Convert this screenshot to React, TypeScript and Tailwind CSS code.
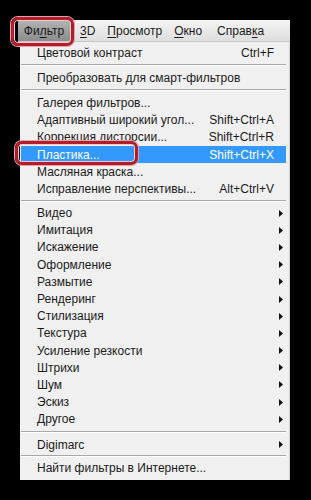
import React from "react";

type Item =
  | { t: "row"; label: string; sc?: string; sub?: boolean; hl?: boolean }
  | { t: "sep"; h: number };

const items: Item[] = [
  { t: "row", label: "Цветовой контраст", sc: "Ctrl+F" },
  { t: "sep", h: 8 },
  { t: "row", label: "Преобразовать для смарт-фильтров" },
  { t: "sep", h: 8 },
  { t: "row", label: "Галерея фильтров..." },
  { t: "row", label: "Адаптивный широкий угол...", sc: "Shift+Ctrl+A" },
  { t: "row", label: "Коррекция дисторсии...", sc: "Shift+Ctrl+R" },
  { t: "row", label: "Пластика...", sc: "Shift+Ctrl+X", hl: true },
  { t: "row", label: "Масляная краска..." },
  { t: "row", label: "Исправление перспективы...", sc: "Alt+Ctrl+V" },
  { t: "sep", h: 7 },
  { t: "row", label: "Видео", sub: true },
  { t: "row", label: "Имитация", sub: true },
  { t: "row", label: "Искажение", sub: true },
  { t: "row", label: "Оформление", sub: true },
  { t: "row", label: "Размытие", sub: true },
  { t: "row", label: "Рендеринг", sub: true },
  { t: "row", label: "Стилизация", sub: true },
  { t: "row", label: "Текстура", sub: true },
  { t: "row", label: "Усиление резкости", sub: true },
  { t: "row", label: "Штрихи", sub: true },
  { t: "row", label: "Шум", sub: true },
  { t: "row", label: "Эскиз", sub: true },
  { t: "row", label: "Другое", sub: true },
  { t: "sep", h: 8 },
  { t: "row", label: "Digimarc", sub: true },
  { t: "sep", h: 6 },
  { t: "row", label: "Найти фильтры в Интернете..." },
];

function Arrow({ white }: { white?: boolean }) {
  return (
    <svg width="4" height="7" viewBox="0 0 4 7" className="block">
      <path d="M0 0 L4 3.5 L0 7 Z" fill={white ? "#fff" : "#111"} />
    </svg>
  );
}

export default function App() {
  const font = { fontFamily: '"Liberation Sans", Arial, sans-serif' };
  return (
    <div className="relative w-[311px] h-[500px] bg-black overflow-hidden" style={font}>
      {/* Menu bar */}
      <div className="ml-[18px] mt-[20px] w-[272px] h-[22px] flex items-center bg-gradient-to-b from-[#f4f4f4] to-[#dedede] border-b border-[#c8c8c8] text-[12px] text-[#1b1b1b] leading-none">
        <div className="h-full w-[52px] flex items-center justify-center bg-gradient-to-b from-[#b4b4b4] to-[#8c8c8c]">
          <span>Фи<span className="underline underline-offset-2">л</span>ьтр</span>
        </div>
        <span className="ml-[10px]"><span className="underline underline-offset-2">3</span>D</span>
        <span className="ml-[12px]"><span className="underline underline-offset-2">П</span>росмотр</span>
        <span className="ml-[12px]"><span className="underline underline-offset-2">О</span>кно</span>
        <span className="ml-[15px]">Справ<span className="underline underline-offset-2">к</span>а</span>
      </div>

      {/* Dropdown panel */}
      <div className="ml-[20px] w-[270px] h-[438px] bg-[#f0f0f0] border-r border-[#cfcfcf] pt-[2px] text-[12px] text-[#1b1b1b] leading-none flex flex-col">
        {items.map((it, i) =>
          it.t === "sep" ? (
            <div key={i} className="flex flex-col justify-center ml-[1px] mr-[3px]" style={{ height: it.h }}>
              <div className="h-px bg-[#a8a8a8]" />
              <div className="h-px bg-white" />
            </div>
          ) : (
            <div
              key={i}
              className={
                "h-[17.2px] ml-[1px] mr-[3px] flex items-center pl-[16px] " +
                (it.hl ? "bg-[#3399ff] text-white" : "")
              }
            >
              <span className="flex-1 whitespace-nowrap">{it.label}</span>
              {it.sc && <span className="pr-[12px] whitespace-nowrap">{it.sc}</span>}
              {it.sub && (
                <span className="pr-[3px]">
                  <Arrow white={it.hl} />
                </span>
              )}
            </div>
          )
        )}
      </div>

      {/* Red highlight rings */}
      <div className="absolute left-[11px] top-[17px] w-[63px] h-[29px] rounded-[7px] border-[3px] border-[#b01e2b] shadow-[inset_0_0_0_1px_#f3c9cc,0_0_0_1px_#e8a0a6]" />
      <div className="absolute left-[15px] top-[141px] w-[123px] h-[24px] rounded-[7px] border-[3px] border-[#b01e2b] shadow-[inset_0_0_0_1px_#f3c9cc,0_0_0_1px_#e8a0a6]" />
    </div>
  );
}
